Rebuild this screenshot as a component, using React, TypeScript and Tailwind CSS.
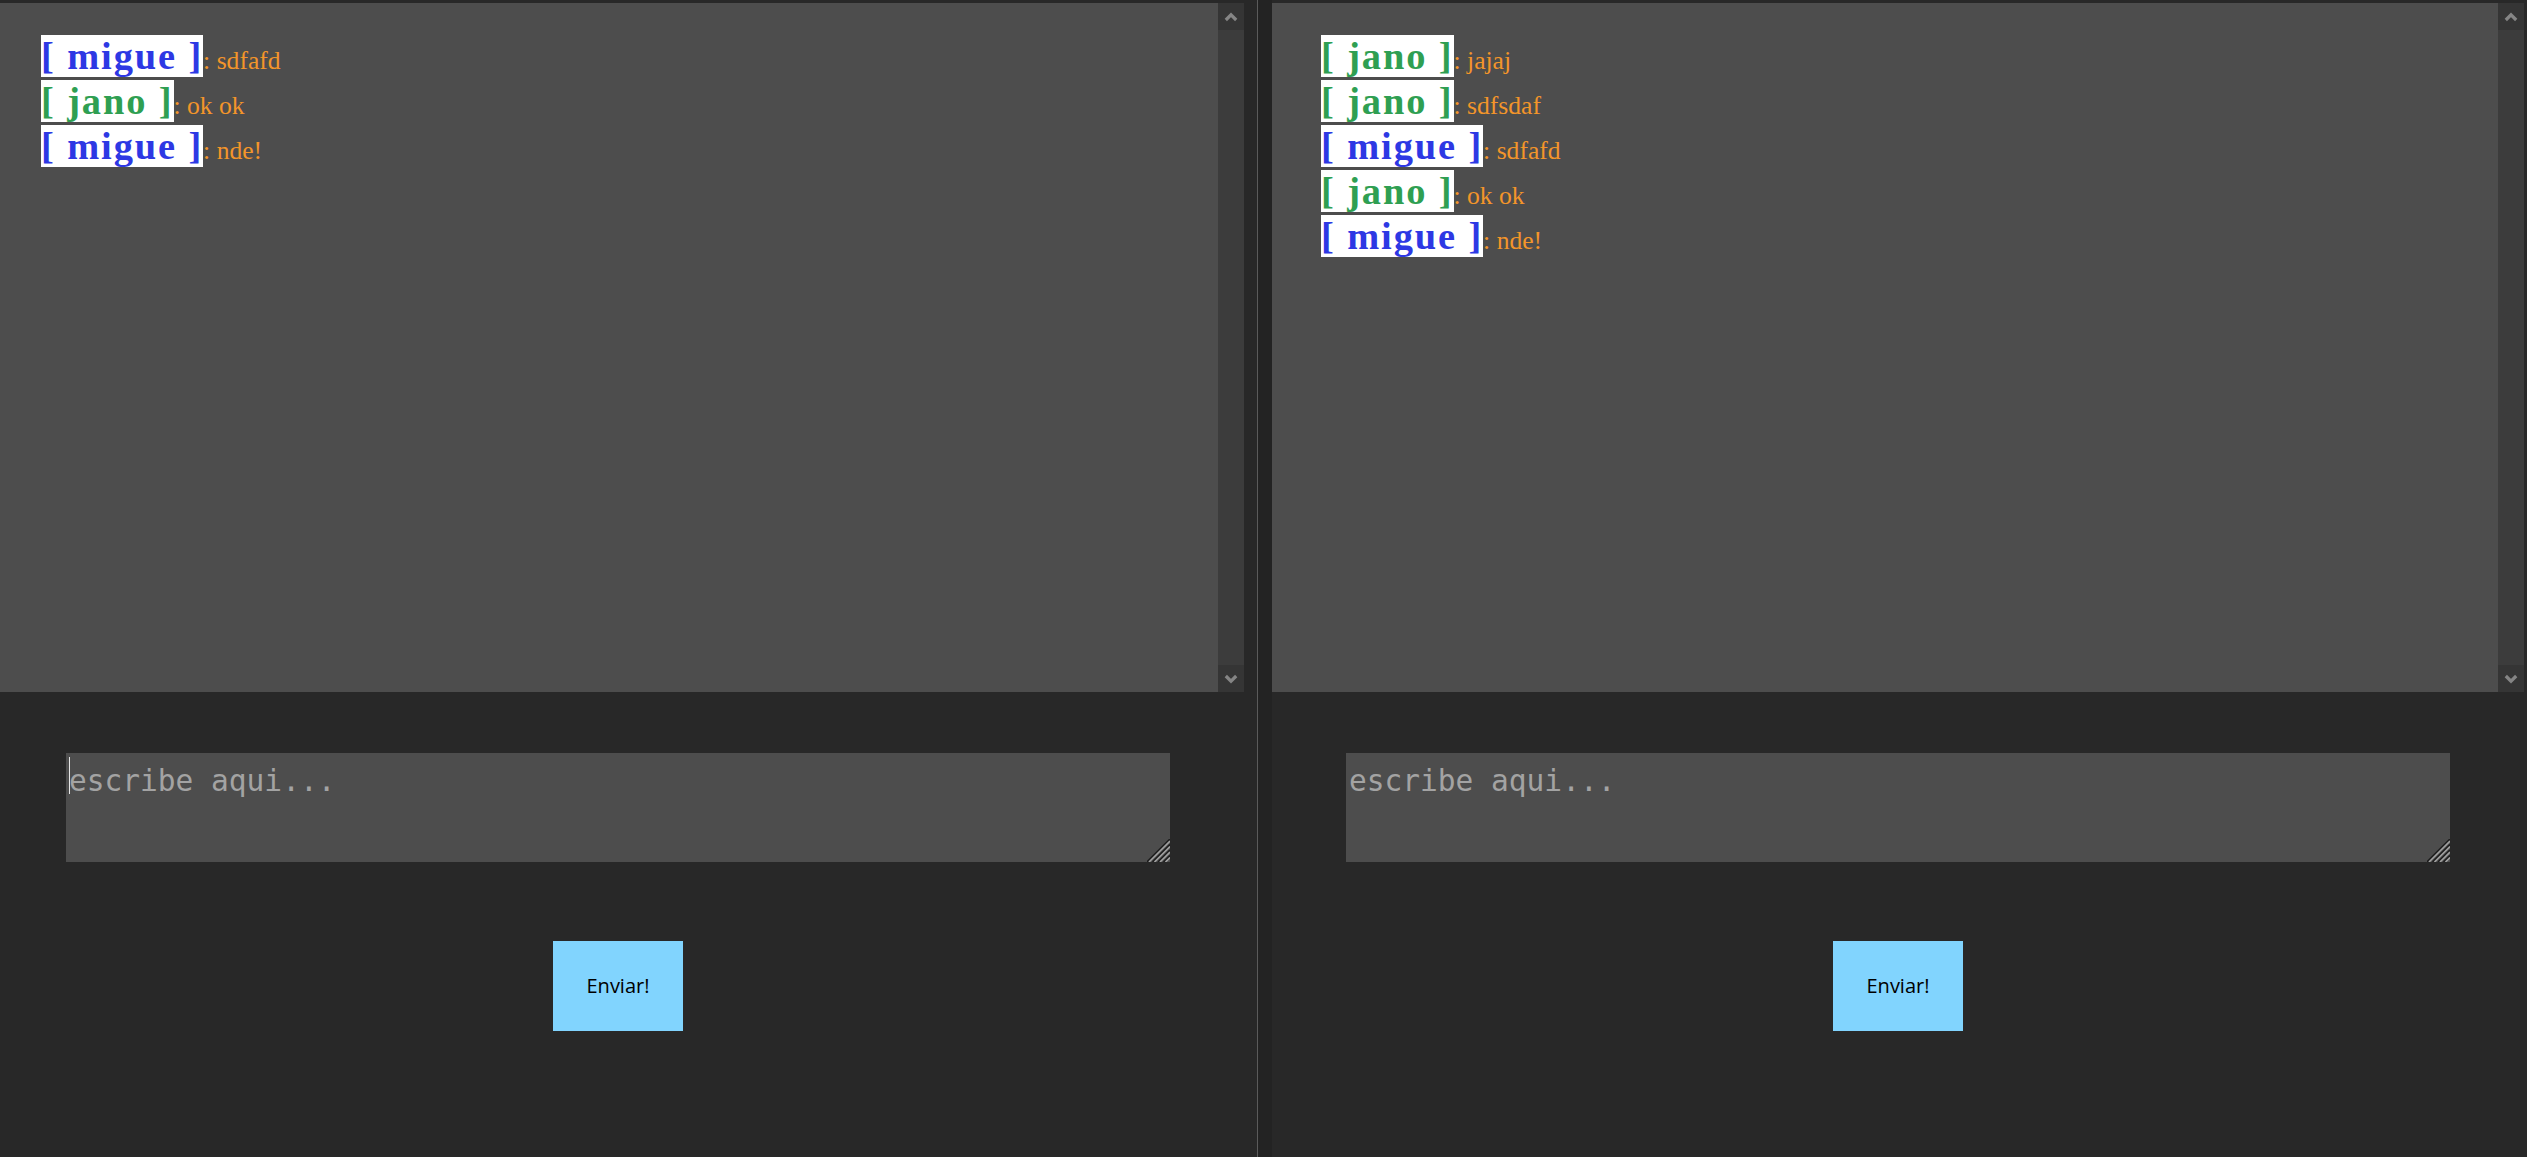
import React from "react";

type Msg = { who: "migue" | "jano"; text: string };

const nameColor: Record<Msg["who"], string> = {
  migue: "text-[#2d38e4]",
  jano: "text-[#2f9f52]",
};

const leftMsgs: Msg[] = [
  { who: "migue", text: "sdfafd" },
  { who: "jano", text: "ok ok" },
  { who: "migue", text: "nde!" },
];

const rightMsgs: Msg[] = [
  { who: "jano", text: "jajaj" },
  { who: "jano", text: "sdfsdaf" },
  { who: "migue", text: "sdfafd" },
  { who: "jano", text: "ok ok" },
  { who: "migue", text: "nde!" },
];

const ScrollArrow: React.FC<{ down?: boolean }> = ({ down }) => (
  <div className="flex h-[27px] w-[26px] items-center justify-center bg-[#353535]">
    <svg
      width="14"
      height="10"
      viewBox="0 0 14 10"
      className={down ? "rotate-180" : ""}
    >
      <polyline
        points="1.8,8 7,2.8 12.2,8"
        fill="none"
        stroke="#858585"
        strokeWidth="3.2"
      />
    </svg>
  </div>
);

// the striped corner grip of the textarea
const Grip: React.FC = () => (
  <svg
    width="23"
    height="23"
    viewBox="0 0 23 23"
    className="pointer-events-none absolute bottom-0 right-0"
  >
    {[0, 5.5, 11, 16.5].map((k) => (
      <g key={k}>
        <line x1={k} y1="23" x2="23" y2={k} stroke="#1c1c1c" strokeWidth="1.6" />
        <line x1={k + 2} y1="23" x2="23" y2={k + 2} stroke="#a0a0a0" strokeWidth="1.6" />
      </g>
    ))}
  </svg>
);

const ChatWindow: React.FC<{ msgs: Msg[]; focused?: boolean }> = ({
  msgs,
  focused,
}) => {
  return (
    <div className="flex w-[1252px] shrink-0 flex-col pt-[3px]">
      <div className="flex h-[689px]">
        <div className="flex-1 bg-[#4d4d4d] pl-[49px] pt-[31px] font-['Liberation_Serif',serif] text-[38.4px] leading-[45px]">
          {msgs.map((m, i) => (
            <div key={i} className="whitespace-nowrap">
              <span
                className={`bg-white font-bold tracking-[1.9px] ${nameColor[m.who]}`}
              >
                [ {m.who} ]
              </span>
              <span className="text-[25.6px] leading-none text-[#f3952a]">
                : {m.text}
              </span>
            </div>
          ))}
        </div>
        <div className="flex w-[26px] flex-col justify-between bg-[#3c3c3c]">
          <ScrollArrow />
          <ScrollArrow down />
        </div>
      </div>

      <div className="flex flex-col items-center">
        <div className="relative mt-[61px] h-[109px] w-[1104px]">
          <textarea
            placeholder="escribe aqui..."
            className="block h-full w-full resize-none border-0 bg-[#4d4d4d] pl-[3px] pt-[6px] font-['DejaVu_Sans_Mono',monospace] text-[29.5px] text-[#e0e0e0] outline-none placeholder:text-[#a3a3a3]"
          />
          {focused && (
            <div className="pointer-events-none absolute left-[3px] top-[4px] h-[37px] w-px bg-[#e6e6e6]" />
          )}
          <Grip />
        </div>
        <button className="mt-[79px] h-[90px] w-[130px] bg-[#81d4fe] font-['Open_Sans',sans-serif] text-[20px] text-black">
          Enviar!
        </button>
      </div>
    </div>
  );
};

export default function App() {
  return (
    <div className="flex h-[1157px] w-[2527px] overflow-hidden bg-[#282828]">
      <div className="flex w-[1257px] shrink-0 overflow-hidden">
        <div className="-ml-[8px]">
          <ChatWindow msgs={leftMsgs} focused />
        </div>
      </div>
      <div className="w-px shrink-0 bg-[#5b5b5b]" />
      <div className="w-[14px] shrink-0 bg-[#232323]" />
      <ChatWindow msgs={rightMsgs} />
    </div>
  );
}
